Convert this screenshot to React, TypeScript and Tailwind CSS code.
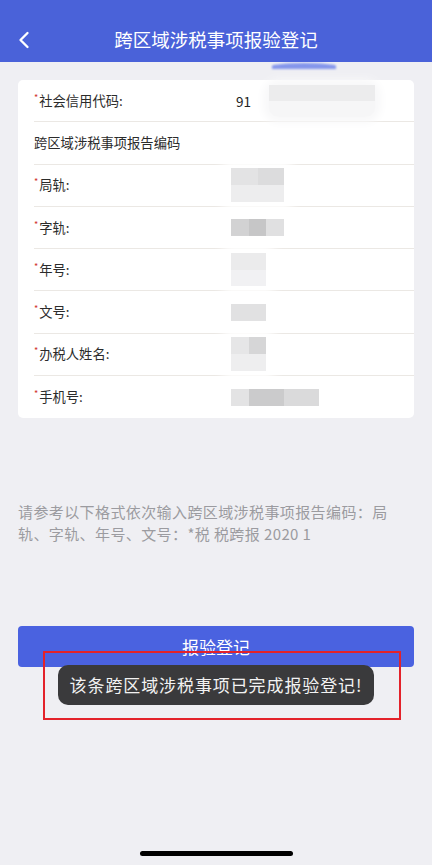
import { ChevronLeft } from "lucide-react";

type Row = {
  label: string;
  required: boolean;
  value?: React.ReactNode;
};

const font = {
  fontFamily: '"Noto Sans CJK SC", "Noto Sans", "Liberation Sans", sans-serif',
};

const rows: Row[] = [
  {
    label: "社会信用代码:",
    required: true,
    value: (
      <div className="flex items-center">
        <span className="text-[13.5px] text-[#222] pl-[5px]">91</span>
        <div className="relative ml-[18px] w-[106px] h-[32px] bg-[#f6f6f7] shadow-[0_0_8px_6px_#f8f8f9] rounded-[10px]">
          <div className="h-[16px] bg-[#ececed]" />
        </div>
      </div>
    ),
  },
  { label: "跨区域涉税事项报告编码", required: false },
  {
    label: "局轨:",
    required: true,
    value: (
      <div className="relative w-[53px] h-[34px] shadow-[0_0_10px_8px_#ffffff] flex flex-col blur-[0.5px]">
        <div className="flex h-1/2">
          <div className="flex-1 bg-[#e3e3e4]" />
          <div className="flex-1 bg-[#dcdcdd]" />
        </div>
        <div className="h-1/2 bg-[#ededee]" />
      </div>
    ),
  },
  {
    label: "字轨:",
    required: true,
    value: (
      <div className="relative w-[53px] h-[17px] flex blur-[0.5px] shadow-[0_0_10px_6px_#ffffff]">
        <div className="flex-1 bg-[#d2d2d3]" />
        <div className="flex-1 bg-[#c6c6c7]" />
        <div className="flex-1 bg-[#e0e0e1]" />
      </div>
    ),
  },
  {
    label: "年号:",
    required: true,
    value: (
      <div className="relative w-[35px] h-[33px] flex flex-col blur-[0.5px] shadow-[0_0_10px_8px_#ffffff]">
        <div className="h-1/2 bg-[#ebebec]" />
        <div className="h-1/2 bg-[#f1f1f3]" />
      </div>
    ),
  },
  {
    label: "文号:",
    required: true,
    value: (
      <div className="relative w-[35px] h-[17px] bg-[#e1e1e2] blur-[0.5px] shadow-[0_0_10px_6px_#ffffff]" />
    ),
  },
  {
    label: "办税人姓名:",
    required: true,
    value: (
      <div className="relative w-[35px] h-[34px] flex flex-col blur-[0.5px] shadow-[0_0_10px_8px_#ffffff]">
        <div className="flex h-1/2">
          <div className="flex-1 bg-[#e6e6e7]" />
          <div className="flex-1 bg-[#d6d6d7]" />
        </div>
        <div className="h-1/2 bg-[#eeeeef]" />
      </div>
    ),
  },
  {
    label: "手机号:",
    required: true,
    value: (
      <div className="relative w-[88px] h-[17px] flex blur-[0.5px] shadow-[0_0_10px_6px_#ffffff]">
        <div className="w-[18px] bg-[#e3e3e4]" />
        <div className="w-[35px] bg-[#cbcbcc]" />
        <div className="w-[35px] bg-[#dadadb]" />
      </div>
    ),
  },
];

export default function App() {
  return (
    <div
      className="relative w-[432px] h-[865px] overflow-hidden bg-[#efeff3] flex flex-col"
      style={font}
    >
      {/* header */}
      <div className="h-[62px] bg-[#4a62d9] flex items-center px-[10px] pt-[18px] relative">
        <ChevronLeft className="text-white w-[28px] h-[28px]" strokeWidth={2} />
        <div className="absolute left-0 right-0 top-[18px] bottom-0 flex items-center justify-center text-white text-[18.5px] pointer-events-none">
          跨区域涉税事项报验登记
        </div>
      </div>

      {/* blurred arc under header */}
      <div className="absolute left-[272px] top-[63px] w-[64px] h-[6px] rounded-t-[50%] bg-[#6a80ea] blur-[0.8px] opacity-80" />

      {/* form card */}
      <div className="mx-[18px] mt-[18px] bg-white rounded-[5px] pl-[16px]">
        {rows.map((r, i) => (
          <div
            key={r.label}
            className={`flex items-center h-[42.3px] ${
              i < rows.length - 1 ? "border-b border-[#ebe8e4]" : ""
            }`}
          >
            <div className="w-[197px] text-[13.3px] text-[#2b2b2b] flex items-start">
              {r.required && (
                <span className="text-[#d0342c] text-[9px] leading-[14px] mr-[1px]">*</span>
              )}
              <span>{r.label}</span>
            </div>
            <div className="flex-1">{r.value}</div>
          </div>
        ))}
      </div>

      {/* hint */}
      <div className="mt-[83px] pl-[18px] pr-[30px] text-[15px] leading-[22px] text-[#9b9ba0] tracking-[0.4px]">
        请参考以下格式依次输入跨区域涉税事项报告编码：局轨、字轨、年号、文号：*税 税跨报 2020 1
      </div>

      {/* button */}
      <div className="mt-[81px] mx-[18px] h-[41px] bg-[#4a62e0] rounded-[4px] flex items-center justify-center text-white text-[17px]">
        报验登记
      </div>

      {/* toast */}
      <div className="absolute left-[58px] top-[665px] w-[316px] h-[40px] rounded-[10px] bg-[#3a3a3c] flex items-center justify-center text-[#f2f2f2] text-[17px] tracking-[0.9px]">
        该条跨区域涉税事项已完成报验登记!
      </div>

      {/* red highlight box */}
      <div className="absolute left-[43px] top-[651px] w-[358px] h-[69px] border-2 border-[#e3222a]" />

      {/* home indicator */}
      <div className="mt-auto mb-[9px] mx-auto w-[153px] h-[5px] rounded-full bg-black" />
    </div>
  );
}
